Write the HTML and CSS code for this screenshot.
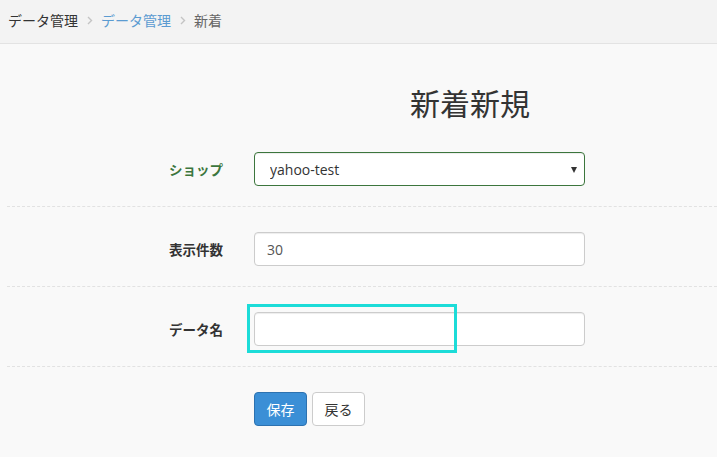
FILE: index.html
```html
<!DOCTYPE html>
<html lang="ja">
<head>
<meta charset="utf-8">
<link rel="stylesheet" href="styles.css">
</head>
<body>
<nav class="crumbs">
  <span class="crumb">データ管理</span>
  <svg class="sep" width="6" height="9" viewBox="0 0 6 9"><path d="M1 1l3.5 3.5L1 8" fill="none" stroke="#c4c4c4" stroke-width="1.4"/></svg>
  <a class="crumb link">データ管理</a>
  <svg class="sep" width="6" height="9" viewBox="0 0 6 9"><path d="M1 1l3.5 3.5L1 8" fill="none" stroke="#c4c4c4" stroke-width="1.4"/></svg>
  <span class="crumb current">新着</span>
</nav>
<main class="main">
  <h1 class="title">新着新規</h1>
  <form class="form">
    <div class="group success">
      <label class="label">ショップ</label>
      <div class="field">
        <div class="select-wrap">
          <select class="control select"><option>yahoo-test</option></select>
          <span class="caret"></span>
        </div>
      </div>
    </div>
    <div class="group">
      <label class="label">表示件数</label>
      <div class="field"><input class="control" type="text" value="30"></div>
    </div>
    <div class="group">
      <label class="label">データ名</label>
      <div class="field">
        <div class="hl-wrap">
          <input class="control" type="text" value="">
          <span class="highlight"></span>
        </div>
      </div>
    </div>
    <div class="actions">
      <button type="button" class="btn primary">保存</button>
      <button type="button" class="btn">戻る</button>
    </div>
  </form>
</main>
</body>
</html>
```
FILE: styles.css
```css
* { box-sizing: border-box; }
html, body { margin: 0; padding: 0; }
body {
  background: #f9f9f9;
  font-family: "Open Sans", "Noto Sans CJK JP", sans-serif;
  color: #333;
  width: 717px;
  height: 457px;
  overflow: hidden;
}
.crumbs {
  height: 44px;
  background: #f3f3f3;
  border-bottom: 1px solid #e3e3e3;
  display: flex;
  align-items: center;
  padding: 0 0 3px 8px;
  font-size: 14px;
  font-family: "Noto Sans CJK JP", sans-serif;
}
.crumb { color: #333; }
.crumb.link { color: #5b9bd1; }
.crumb.current { color: #666; }
.sep { margin: 0 8px 0 9px; }
.main { padding-left: 7px; }
.title {
  margin: 42px 0 33px 247px;
  width: 432px;
  text-align: center;
  font-size: 30px;
  line-height: 33px;
  font-weight: 400;
  font-family: "Noto Sans CJK JP", sans-serif;
  color: #333;
}
.form { margin: 0; }
.group {
  display: grid;
  grid-template-columns: 232px 361px;
  align-items: center;
  padding-bottom: 20px;
  border-bottom: 1px dashed #e2e2e2;
  margin-bottom: 25px;
}
.label {
  text-align: right;
  padding-right: 16px;
  font-family: "Noto Sans CJK JP", sans-serif;
  font-weight: 700;
  font-size: 13.5px;
  color: #333;
}
.success .label { color: #3c763d; }
.field { padding: 0 15px; }
.control {
  display: block;
  width: 331px;
  height: 34px;
  padding: 6px 12px;
  font-family: "Open Sans", "Noto Sans CJK JP", sans-serif;
  font-size: 14px;
  color: #555;
  background: #fff;
  border: 1px solid #ccc;
  border-radius: 4px;
  box-shadow: inset 0 1px 1px rgba(0,0,0,.075);
  outline: none;
}
.select-wrap, .hl-wrap { position: relative; }
.select {
  appearance: none;
  -webkit-appearance: none;
  padding-left: 15px;
  color: #333;
}
.success .control { border-color: #3c763d; }
.caret {
  position: absolute;
  right: 8px;
  top: 15px;
  width: 0;
  height: 0;
  border-left: 3px solid transparent;
  border-right: 3px solid transparent;
  border-top: 6px solid #333;
}
.highlight {
  position: absolute;
  left: -7px;
  top: -8px;
  width: 210px;
  height: 49px;
  border: 3px solid #1cdcd8;
}
.actions {
  display: flex;
  gap: 5px;
  padding-left: 247px;
}
.btn {
  height: 34px;
  padding: 0 11.5px;
  font-family: "Noto Sans CJK JP", sans-serif;
  font-size: 14px;
  color: #333;
  background: #fff;
  border: 1px solid #ccc;
  border-radius: 4px;
}
.btn.primary {
  background: #3b8fd6;
  border-color: #2d72b0;
  color: #fff;
}
```
